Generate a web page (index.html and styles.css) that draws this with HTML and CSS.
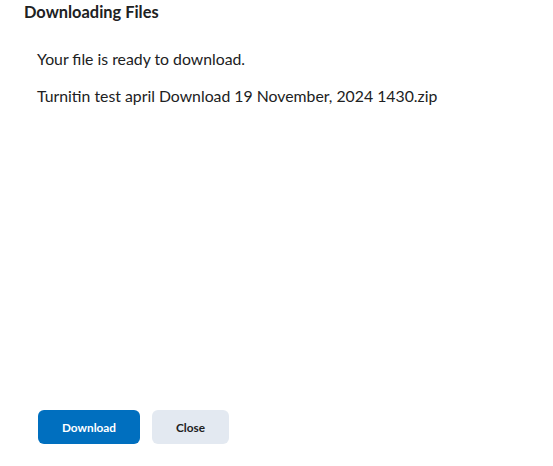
FILE: index.html
```html
<!DOCTYPE html>
<html>
<head>
<meta charset="utf-8">
<link rel="stylesheet" href="styles.css">
</head>
<body>
<div class="dialog">
  <h1 class="title">Downloading Files</h1>
  <div class="content">
    <p class="line">Your file is ready to download.</p>
    <p class="line">Turnitin test april Download 19 November, 2024 1430.zip</p>
  </div>
  <div class="footer">
    <button class="btn primary">Download</button>
    <button class="btn secondary">Close</button>
  </div>
</div>
</body>
</html>
```
FILE: styles.css
```css
html, body {
  margin: 0;
  padding: 0;
  background: #ffffff;
}
body {
  font-family: Lato, "Noto Sans", sans-serif;
  color: #202122;
  width: 553px;
  height: 466px;
  overflow: hidden;
}
.dialog {
  display: flex;
  flex-direction: column;
  height: 466px;
  box-sizing: border-box;
}
.title {
  margin: 0;
  padding: 2px 0 0 24px;
  font-size: 16.4px;
  font-weight: 700;
  line-height: 20px;
}
.content {
  padding: 27px 0 0 37px;
  flex: 1;
}
.line {
  margin: 0 0 17px 0;
  font-size: 15.8px;
  line-height: 20px;
}
.footer {
  display: flex;
  gap: 12px;
  padding: 0 0 22px 38px;
}
.btn {
  font-family: Lato, "Noto Sans", sans-serif;
  font-weight: 700;
  font-size: 11.8px;
  height: 34px;
  padding: 0;
  border: none;
  border-radius: 6px;
  cursor: pointer;
}
.primary {
  width: 102px;
  background: #006fbf;
  color: #ffffff;
}
.secondary {
  width: 77px;
  background: #e3e9f1;
  color: #202122;
}
```
